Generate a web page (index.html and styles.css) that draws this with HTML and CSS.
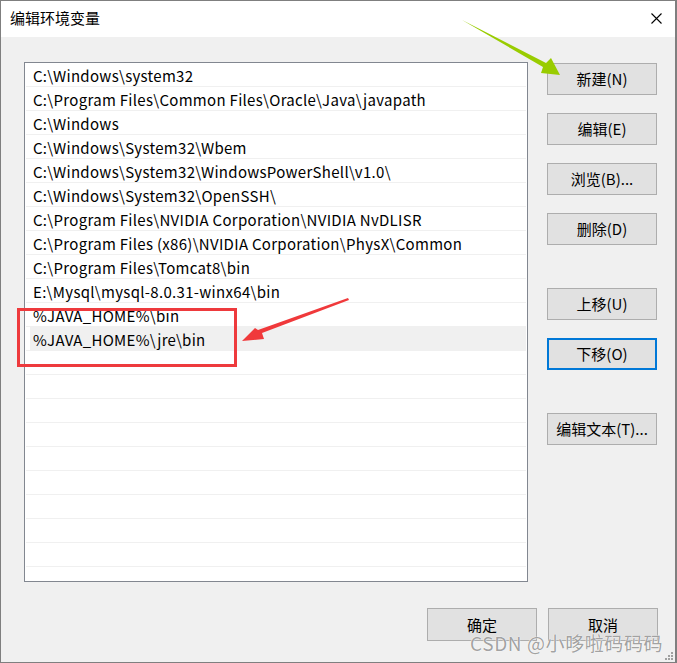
FILE: index.html
```html
<!DOCTYPE html>
<html lang="zh-CN">
<head>
<meta charset="utf-8">
<title>编辑环境变量</title>
<link rel="stylesheet" href="styles.css">
</head>
<body>
<div class="window">
  <div class="titlebar">
    <span class="title">编辑环境变量</span>
    <svg class="close" width="11" height="11" viewBox="0 0 11 11"><path d="M0.5 0.5 L10.5 10.5 M10.5 0.5 L0.5 10.5" stroke="#000" stroke-width="1.1" fill="none"/></svg>
  </div>
  <div class="content">
    <div class="main">
      <ul class="list">
        <li><span class="cell">C:\Windows\system32</span></li>
        <li><span class="cell">C:\Program Files\Common Files\Oracle\Java\javapath</span></li>
        <li><span class="cell">C:\Windows</span></li>
        <li><span class="cell">C:\Windows\System32\Wbem</span></li>
        <li><span class="cell">C:\Windows\System32\WindowsPowerShell\v1.0\</span></li>
        <li><span class="cell">C:\Windows\System32\OpenSSH\</span></li>
        <li><span class="cell">C:\Program Files\NVIDIA Corporation\NVIDIA NvDLISR</span></li>
        <li><span class="cell">C:\Program Files (x86)\NVIDIA Corporation\PhysX\Common</span></li>
        <li><span class="cell">C:\Program Files\Tomcat8\bin</span></li>
        <li><span class="cell">E:\Mysql\mysql-8.0.31-winx64\bin</span></li>
        <li><span class="cell">%JAVA_HOME%\bin</span></li>
        <li class="selected"><span class="cell">%JAVA_HOME%\jre\bin</span></li>
        <li><span class="cell"></span></li>
        <li><span class="cell"></span></li>
        <li><span class="cell"></span></li>
        <li><span class="cell"></span></li>
        <li><span class="cell"></span></li>
        <li><span class="cell"></span></li>
        <li><span class="cell"></span></li>
        <li><span class="cell"></span></li>
        <li><span class="cell"></span></li>
      </ul>
      <div class="side">
        <div class="group">
          <button class="btn">新建(N)</button>
          <button class="btn">编辑(E)</button>
          <button class="btn">浏览(B)...</button>
          <button class="btn">删除(D)</button>
        </div>
        <div class="group group-move">
          <button class="btn">上移(U)</button>
          <button class="btn focused">下移(O)</button>
        </div>
        <div class="group group-text">
          <button class="btn">编辑文本(T)...</button>
        </div>
      </div>
    </div>
    <div class="footer">
      <button class="btn">确定</button>
      <button class="btn">取消</button>
    </div>
  </div>

  <div class="redbox"></div>
  <svg class="annot" width="677" height="663" viewBox="0 0 677 663">
    <polygon points="348,298 349,300 262,333 264,339 242,341 255,328 258,330" fill="#f0393b"/>
    <polygon points="462,20 464,21 546,63 551,58 560,75 541,73 543,67" fill="#99cc00"/>
  </svg>
  <div class="watermark">CSDN @小哆啦码码码</div>
  <svg class="grip" width="9" height="9" viewBox="0 0 9 9">
    <rect x="6" y="0" width="2" height="2" fill="#a0a0a0"/>
    <rect x="3" y="3" width="2" height="2" fill="#a0a0a0"/>
    <rect x="6" y="3" width="2" height="2" fill="#a0a0a0"/>
    <rect x="0" y="6" width="2" height="2" fill="#a0a0a0"/>
    <rect x="3" y="6" width="2" height="2" fill="#a0a0a0"/>
    <rect x="6" y="6" width="2" height="2" fill="#a0a0a0"/>
  </svg>
</div>
</body>
</html>
```
FILE: styles.css
```css
* { box-sizing: border-box; }
html, body { margin: 0; padding: 0; background: #ffffff; }
body {
  font-family: "Noto Sans CJK SC", "Noto Sans", sans-serif;
  font-size: 15px;
  color: #000;
}
.window {
  position: relative;
  width: 677px;
  height: 663px;
  border: 1px solid #7f7f7f;
  border-right-width: 2px;
  background: #f0f0f0;
  display: flex;
  flex-direction: column;
  overflow: hidden;
}
.titlebar {
  height: 36px;
  background: #fff;
  display: flex;
  align-items: center;
  justify-content: space-between;
  padding: 0 13px 0 9px;
  flex: none;
}
.title { font-size: 15px; line-height: 20px; margin-top: -2px; }
.close { display: block; margin-top: -1px; }
.content {
  flex: 1;
  display: flex;
  flex-direction: column;
  padding: 25px 17px 0 23px;
}
.main {
  display: flex;
  gap: 19px;
}
.list {
  list-style: none;
  margin: 0;
  padding: 0 1px;
  width: 504px;
  height: 520px;
  border: 1px solid #828790;
  background: #fff;
  flex: none;
}
.list li {
  height: 24px;
  border-bottom: 1px solid #f0f0f0;
  padding-left: 4px;
  display: flex;
}
.cell {
  flex: 1;
  padding-left: 3px;
  padding-top: 1px;
  line-height: 23px;
  white-space: nowrap;
  letter-spacing: 0.3px;
}
.list li.selected .cell { background: #f0f0f0; height: 24px; }
.side {
  display: flex;
  flex-direction: column;
  padding-top: 1px;
}
.group { display: flex; flex-direction: column; gap: 18px; }
.group-move { margin-top: 43px; }
.group-text { margin-top: 43px; }
.btn {
  width: 110px;
  height: 32px;
  background: #e1e1e1;
  border: 1px solid #adadad;
  font-family: "Noto Sans CJK SC", "Noto Sans", sans-serif;
  font-size: 15px;
  color: #000;
  padding: 0;
  margin: 0;
  line-height: 20px;
}
.btn.focused { border: 2px solid #0078d7; }
.footer {
  display: flex;
  justify-content: flex-end;
  gap: 11px;
  margin-top: 26px;
}
.footer .btn { height: 33px; }
.redbox {
  position: absolute;
  left: 16px;
  top: 307px;
  width: 220px;
  height: 59px;
  border: 3px solid #ee3a3d;
}
.annot { position: absolute; left: -1px; top: -1px; }
.watermark {
  position: absolute;
  left: 469px;
  top: 632px;
  font-size: 19px;
  line-height: 20px;
  color: rgba(120,120,120,0.7);
  text-shadow: 0 0 1px #fff, 0 0 1px #fff;
  white-space: nowrap;
  letter-spacing: 0.6px;
}
.grip { position: absolute; right: 1px; bottom: 1px; }
```
